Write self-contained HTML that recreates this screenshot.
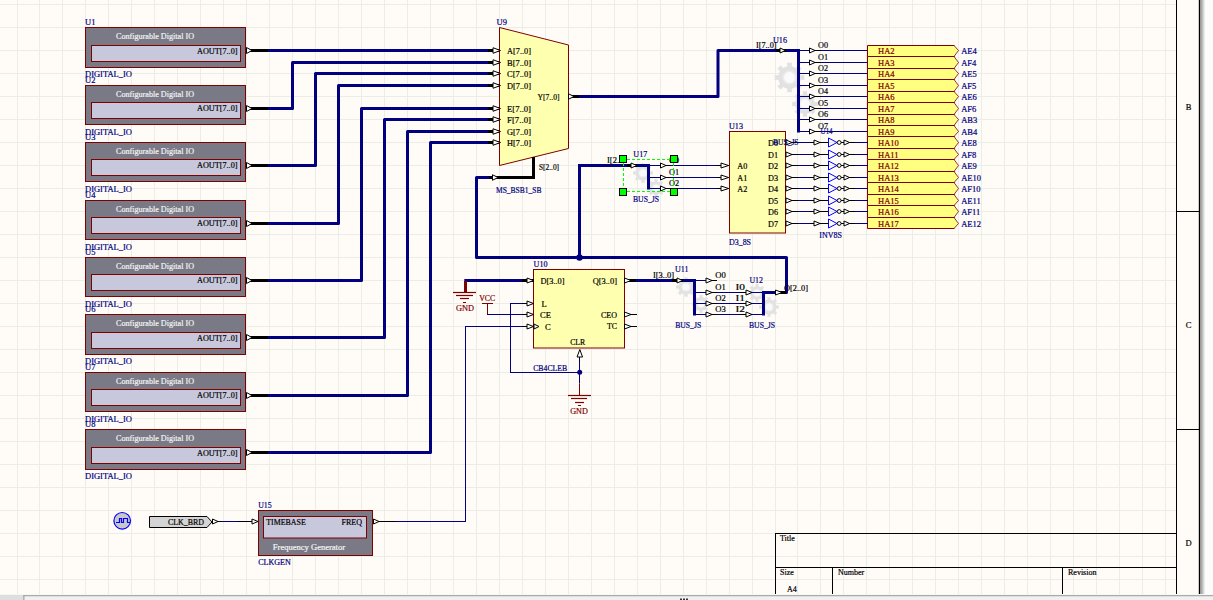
<!DOCTYPE html><html><head><meta charset="utf-8"><style>html,body{margin:0;padding:0;overflow:hidden;background:#FCFCFC}svg{display:block}.s{font-family:"Liberation Serif",serif;stroke-width:0.2px}</style></head><body><svg width="1213" height="600" viewBox="0 0 1213 600"><rect x="0" y="0" width="1213" height="600" fill="#FCFCFC"/>
<rect x="0" y="0" width="1200" height="594" fill="#FFFCF8"/>
<rect x="17" y="0" width="1" height="594" fill="#ECEDE7"/>
<rect x="39" y="0" width="1" height="594" fill="#ECEDE7"/>
<rect x="62" y="0" width="1" height="594" fill="#ECEDE7"/>
<rect x="85" y="0" width="1" height="594" fill="#ECEDE7"/>
<rect x="108" y="0" width="1" height="594" fill="#ECEDE7"/>
<rect x="131" y="0" width="1" height="594" fill="#ECEDE7"/>
<rect x="154" y="0" width="1" height="594" fill="#ECEDE7"/>
<rect x="177" y="0" width="1" height="594" fill="#ECEDE7"/>
<rect x="200" y="0" width="1" height="594" fill="#ECEDE7"/>
<rect x="223" y="0" width="1" height="594" fill="#ECEDE7"/>
<rect x="246" y="0" width="1" height="594" fill="#ECEDE7"/>
<rect x="269" y="0" width="1" height="594" fill="#ECEDE7"/>
<rect x="292" y="0" width="1" height="594" fill="#ECEDE7"/>
<rect x="315" y="0" width="1" height="594" fill="#ECEDE7"/>
<rect x="338" y="0" width="1" height="594" fill="#ECEDE7"/>
<rect x="361" y="0" width="1" height="594" fill="#ECEDE7"/>
<rect x="384" y="0" width="1" height="594" fill="#ECEDE7"/>
<rect x="407" y="0" width="1" height="594" fill="#ECEDE7"/>
<rect x="430" y="0" width="1" height="594" fill="#ECEDE7"/>
<rect x="453" y="0" width="1" height="594" fill="#ECEDE7"/>
<rect x="476" y="0" width="1" height="594" fill="#ECEDE7"/>
<rect x="499" y="0" width="1" height="594" fill="#ECEDE7"/>
<rect x="522" y="0" width="1" height="594" fill="#ECEDE7"/>
<rect x="545" y="0" width="1" height="594" fill="#ECEDE7"/>
<rect x="568" y="0" width="1" height="594" fill="#ECEDE7"/>
<rect x="591" y="0" width="1" height="594" fill="#ECEDE7"/>
<rect x="614" y="0" width="1" height="594" fill="#ECEDE7"/>
<rect x="637" y="0" width="1" height="594" fill="#ECEDE7"/>
<rect x="660" y="0" width="1" height="594" fill="#ECEDE7"/>
<rect x="683" y="0" width="1" height="594" fill="#ECEDE7"/>
<rect x="706" y="0" width="1" height="594" fill="#ECEDE7"/>
<rect x="729" y="0" width="1" height="594" fill="#ECEDE7"/>
<rect x="752" y="0" width="1" height="594" fill="#ECEDE7"/>
<rect x="775" y="0" width="1" height="594" fill="#ECEDE7"/>
<rect x="797" y="0" width="1" height="594" fill="#ECEDE7"/>
<rect x="820" y="0" width="1" height="594" fill="#ECEDE7"/>
<rect x="843" y="0" width="1" height="594" fill="#ECEDE7"/>
<rect x="866" y="0" width="1" height="594" fill="#ECEDE7"/>
<rect x="889" y="0" width="1" height="594" fill="#ECEDE7"/>
<rect x="912" y="0" width="1" height="594" fill="#ECEDE7"/>
<rect x="935" y="0" width="1" height="594" fill="#ECEDE7"/>
<rect x="958" y="0" width="1" height="594" fill="#ECEDE7"/>
<rect x="981" y="0" width="1" height="594" fill="#ECEDE7"/>
<rect x="1004" y="0" width="1" height="594" fill="#ECEDE7"/>
<rect x="1027" y="0" width="1" height="594" fill="#ECEDE7"/>
<rect x="1050" y="0" width="1" height="594" fill="#ECEDE7"/>
<rect x="1073" y="0" width="1" height="594" fill="#ECEDE7"/>
<rect x="1096" y="0" width="1" height="594" fill="#ECEDE7"/>
<rect x="1119" y="0" width="1" height="594" fill="#ECEDE7"/>
<rect x="1142" y="0" width="1" height="594" fill="#ECEDE7"/>
<rect x="1165" y="0" width="1" height="594" fill="#ECEDE7"/>
<rect x="0" y="4" width="1176" height="1" fill="#ECEDE7"/>
<rect x="0" y="27" width="1176" height="1" fill="#ECEDE7"/>
<rect x="0" y="50" width="1176" height="1" fill="#ECEDE7"/>
<rect x="0" y="73" width="1176" height="1" fill="#ECEDE7"/>
<rect x="0" y="96" width="1176" height="1" fill="#ECEDE7"/>
<rect x="0" y="119" width="1176" height="1" fill="#ECEDE7"/>
<rect x="0" y="142" width="1176" height="1" fill="#ECEDE7"/>
<rect x="0" y="165" width="1176" height="1" fill="#ECEDE7"/>
<rect x="0" y="188" width="1176" height="1" fill="#ECEDE7"/>
<rect x="0" y="211" width="1176" height="1" fill="#ECEDE7"/>
<rect x="0" y="234" width="1176" height="1" fill="#ECEDE7"/>
<rect x="0" y="257" width="1176" height="1" fill="#ECEDE7"/>
<rect x="0" y="280" width="1176" height="1" fill="#ECEDE7"/>
<rect x="0" y="303" width="1176" height="1" fill="#ECEDE7"/>
<rect x="0" y="326" width="1176" height="1" fill="#ECEDE7"/>
<rect x="0" y="349" width="1176" height="1" fill="#ECEDE7"/>
<rect x="0" y="372" width="1176" height="1" fill="#ECEDE7"/>
<rect x="0" y="395" width="1176" height="1" fill="#ECEDE7"/>
<rect x="0" y="418" width="1176" height="1" fill="#ECEDE7"/>
<rect x="0" y="441" width="1176" height="1" fill="#ECEDE7"/>
<rect x="0" y="464" width="1176" height="1" fill="#ECEDE7"/>
<rect x="0" y="487" width="1176" height="1" fill="#ECEDE7"/>
<rect x="0" y="510" width="1176" height="1" fill="#ECEDE7"/>
<rect x="0" y="533" width="1176" height="1" fill="#ECEDE7"/>
<rect x="0" y="556" width="1176" height="1" fill="#ECEDE7"/>
<rect x="0" y="579" width="1176" height="1" fill="#ECEDE7"/>
<rect x="1176.0" y="0" width="1" height="594" fill="#000"/>
<rect x="1198.8" y="0" width="1.4" height="594" fill="#000"/>
<defs><linearGradient id="sh" x1="0" x2="1"><stop offset="0" stop-color="#8C8C8C"/><stop offset="1" stop-color="#FCFCFC"/></linearGradient></defs>
<rect x="1200.2" y="0" width="5" height="594" fill="url(#sh)"/>
<rect x="1176" y="211.0" width="24" height="1" fill="#000"/>
<rect x="1176" y="429.0" width="24" height="1" fill="#000"/>
<text x="1188.5" y="110" fill="#000" stroke="#000" font-size="8.5" text-anchor="middle" class="s">B</text>
<text x="1188.5" y="328" fill="#000" stroke="#000" font-size="8.5" text-anchor="middle" class="s">C</text>
<text x="1188.5" y="546" fill="#000" stroke="#000" font-size="8.5" text-anchor="middle" class="s">D</text>
<rect x="775" y="533.0" width="401" height="1" fill="#000"/>
<rect x="775" y="567.0" width="401" height="1" fill="#000"/>
<rect x="775.0" y="533" width="1" height="61" fill="#000"/>
<rect x="832.0" y="567" width="1" height="27" fill="#000"/>
<rect x="1062.0" y="567" width="1" height="27" fill="#000"/>
<text x="780" y="541" fill="#000" stroke="#000" font-size="8" class="s">Title</text>
<text x="780" y="575" fill="#000" stroke="#000" font-size="8" class="s">Size</text>
<text x="838" y="575" fill="#000" stroke="#000" font-size="8" class="s">Number</text>
<text x="1068" y="575" fill="#000" stroke="#000" font-size="8" class="s">Revision</text>
<text x="787" y="592" fill="#000" stroke="#000" font-size="8" class="s">A4</text>
<rect x="0" y="594" width="1213" height="6" fill="#F0F0F0"/>
<rect x="0" y="594.6" width="23" height="5.4" fill="#DEDEDE"/>
<rect x="0" y="594" width="1213" height="0.6" fill="#FDFDFD"/>
<rect x="23.3" y="595.2" width="1190" height="1" fill="#9A9A9A"/>
<rect x="23.3" y="595.2" width="1.1" height="5" fill="#9A9A9A"/>
<rect x="680" y="598.5" width="2" height="1.5" fill="#333"/>
<rect x="683" y="598.5" width="2" height="1.5" fill="#333"/>
<rect x="686" y="598.5" width="2" height="1.5" fill="#333"/>
<polygon points="800.03,73.14 800.68,75.28 804.3,75.04 804.3,79.96 800.68,79.72 800.03,81.86 798.98,83.83 801.7,86.22 798.22,89.7 795.83,86.98 793.86,88.03 791.72,88.68 791.96,92.3 787.04,92.3 787.28,88.68 785.14,88.03 783.17,86.98 780.78,89.7 777.3,86.22 780.02,83.83 778.97,81.86 778.32,79.72 774.7,79.96 774.7,75.04 778.32,75.28 778.97,73.14 780.02,71.17 777.3,68.78 780.78,65.3 783.17,68.02 785.14,66.97 787.28,66.32 787.04,62.7 791.96,62.7 791.72,66.32 793.86,66.97 795.83,68.02 798.22,65.3 801.7,68.78 798.98,71.17" fill="#E2E2E2"/>
<circle cx="789.5" cy="77.5" r="7.2" fill="#EBEBEB"/>
<circle cx="789.5" cy="77.5" r="5.4" fill="#FAFAFA"/>
<polygon points="814.13,100.22 814.69,102.07 817.82,101.87 817.82,106.13 814.69,105.93 814.13,107.78 813.21,109.49 815.58,111.56 812.56,114.58 810.49,112.21 808.78,113.13 806.93,113.69 807.13,116.82 802.87,116.82 803.07,113.69 801.22,113.13 799.51,112.21 797.44,114.58 794.42,111.56 796.79,109.49 795.87,107.78 795.31,105.93 792.18,106.13 792.18,101.87 795.31,102.07 795.87,100.22 796.79,98.51 794.42,96.44 797.44,93.42 799.51,95.79 801.22,94.87 803.07,94.31 802.87,91.18 807.13,91.18 806.93,94.31 808.78,94.87 810.49,95.79 812.56,93.42 815.58,96.44 813.21,98.51" fill="#E2E2E2"/>
<circle cx="805" cy="104" r="6.24" fill="#EBEBEB"/>
<circle cx="805" cy="104" r="4.68" fill="#FAFAFA"/>
<polygon points="650.02,170.09 650.45,171.52 652.86,171.36 652.86,174.64 650.45,174.48 650.02,175.91 649.32,177.22 651.14,178.81 648.81,181.14 647.22,179.32 645.91,180.02 644.48,180.45 644.64,182.86 641.36,182.86 641.52,180.45 640.09,180.02 638.78,179.32 637.19,181.14 634.86,178.81 636.68,177.22 635.98,175.91 635.55,174.48 633.14,174.64 633.14,171.36 635.55,171.52 635.98,170.09 636.68,168.78 634.86,167.19 637.19,164.86 638.78,166.68 640.09,165.98 641.52,165.55 641.36,163.14 644.64,163.14 644.48,165.55 645.91,165.98 647.22,166.68 648.81,164.86 651.14,167.19 649.32,168.78" fill="#E2E2E2"/>
<circle cx="643" cy="173" r="4.8" fill="#EBEBEB"/>
<circle cx="643" cy="173" r="3.6" fill="#FAFAFA"/>
<polygon points="662.32,185.38 662.71,186.67 664.88,186.52 664.88,189.48 662.71,189.33 662.32,190.62 661.69,191.8 663.32,193.23 661.23,195.32 659.8,193.69 658.62,194.32 657.33,194.71 657.48,196.88 654.52,196.88 654.67,194.71 653.38,194.32 652.2,193.69 650.77,195.32 648.68,193.23 650.31,191.8 649.68,190.62 649.29,189.33 647.12,189.48 647.12,186.52 649.29,186.67 649.68,185.38 650.31,184.2 648.68,182.77 650.77,180.68 652.2,182.31 653.38,181.68 654.67,181.29 654.52,179.12 657.48,179.12 657.33,181.29 658.62,181.68 659.8,182.31 661.23,180.68 663.32,182.77 661.69,184.2" fill="#E2E2E2"/>
<circle cx="656" cy="188" r="4.32" fill="#EBEBEB"/>
<circle cx="656" cy="188" r="3.24" fill="#FAFAFA"/>
<polygon points="693.02,284.09 693.45,285.52 695.86,285.36 695.86,288.64 693.45,288.48 693.02,289.91 692.32,291.22 694.14,292.81 691.81,295.14 690.22,293.32 688.91,294.02 687.48,294.45 687.64,296.86 684.36,296.86 684.52,294.45 683.09,294.02 681.78,293.32 680.19,295.14 677.86,292.81 679.68,291.22 678.98,289.91 678.55,288.48 676.14,288.64 676.14,285.36 678.55,285.52 678.98,284.09 679.68,282.78 677.86,281.19 680.19,278.86 681.78,280.68 683.09,279.98 684.52,279.55 684.36,277.14 687.64,277.14 687.48,279.55 688.91,279.98 690.22,280.68 691.81,278.86 694.14,281.19 692.32,282.78" fill="#E2E2E2"/>
<circle cx="686" cy="287" r="4.8" fill="#EBEBEB"/>
<circle cx="686" cy="287" r="3.6" fill="#FAFAFA"/>
<polygon points="707.32,301.38 707.71,302.67 709.88,302.52 709.88,305.48 707.71,305.33 707.32,306.62 706.69,307.8 708.32,309.23 706.23,311.32 704.8,309.69 703.62,310.32 702.33,310.71 702.48,312.88 699.52,312.88 699.67,310.71 698.38,310.32 697.2,309.69 695.77,311.32 693.68,309.23 695.31,307.8 694.68,306.62 694.29,305.33 692.12,305.48 692.12,302.52 694.29,302.67 694.68,301.38 695.31,300.2 693.68,298.77 695.77,296.68 697.2,298.31 698.38,297.68 699.67,297.29 699.52,295.12 702.48,295.12 702.33,297.29 703.62,297.68 704.8,298.31 706.23,296.68 708.32,298.77 706.69,300.2" fill="#E2E2E2"/>
<circle cx="701" cy="304" r="4.32" fill="#EBEBEB"/>
<circle cx="701" cy="304" r="3.24" fill="#FAFAFA"/>
<polygon points="763.32,290.38 763.71,291.67 765.88,291.52 765.88,294.48 763.71,294.33 763.32,295.62 762.69,296.8 764.32,298.23 762.23,300.32 760.8,298.69 759.62,299.32 758.33,299.71 758.48,301.88 755.52,301.88 755.67,299.71 754.38,299.32 753.2,298.69 751.77,300.32 749.68,298.23 751.31,296.8 750.68,295.62 750.29,294.33 748.12,294.48 748.12,291.52 750.29,291.67 750.68,290.38 751.31,289.2 749.68,287.77 751.77,285.68 753.2,287.31 754.38,286.68 755.67,286.29 755.52,284.12 758.48,284.12 758.33,286.29 759.62,286.68 760.8,287.31 762.23,285.68 764.32,287.77 762.69,289.2" fill="#E2E2E2"/>
<circle cx="757" cy="293" r="4.32" fill="#EBEBEB"/>
<circle cx="757" cy="293" r="3.24" fill="#FAFAFA"/>
<polygon points="776.02,304.09 776.45,305.52 778.86,305.36 778.86,308.64 776.45,308.48 776.02,309.91 775.32,311.22 777.14,312.81 774.81,315.14 773.22,313.32 771.91,314.02 770.48,314.45 770.64,316.86 767.36,316.86 767.52,314.45 766.09,314.02 764.78,313.32 763.19,315.14 760.86,312.81 762.68,311.22 761.98,309.91 761.55,308.48 759.14,308.64 759.14,305.36 761.55,305.52 761.98,304.09 762.68,302.78 760.86,301.19 763.19,298.86 764.78,300.68 766.09,299.98 767.52,299.55 767.36,297.14 770.64,297.14 770.48,299.55 771.91,299.98 773.22,300.68 774.81,298.86 777.14,301.19 775.32,302.78" fill="#E2E2E2"/>
<circle cx="769" cy="307" r="4.8" fill="#EBEBEB"/>
<circle cx="769" cy="307" r="3.6" fill="#FAFAFA"/>
<text x="85" y="24.9" fill="#000080" stroke="#000080" font-size="8.5" class="s">U1</text>
<rect x="85.5" y="27.5" width="160" height="40" fill="#7A7A86" stroke="#800000" stroke-width="1"/>
<rect x="91.5" y="45.5" width="149" height="16" fill="#C8C8DC" stroke="#800000" stroke-width="1"/>
<text x="116" y="38.8" fill="#F4F4F4" stroke="#F4F4F4" font-size="8.5" textLength="78" lengthAdjust="spacingAndGlyphs" class="s">Configurable Digital IO</text>
<text x="237.5" y="54.3" fill="#000" stroke="#000" font-size="8.5" text-anchor="end" textLength="40.5" lengthAdjust="spacingAndGlyphs" class="s">AOUT[7..0]</text>
<text x="85" y="76.8" fill="#000080" stroke="#000080" font-size="8.5" textLength="47" lengthAdjust="spacingAndGlyphs" class="s">DIGITAL_IO</text>
<rect x="246" y="49.0" width="22" height="3" fill="#000"/>
<polygon points="246.5,47.5 252.0,50.5 246.5,53.5" fill="#fff" stroke="#000" stroke-width="1"/>
<text x="85" y="82.9" fill="#000080" stroke="#000080" font-size="8.5" class="s">U2</text>
<rect x="85.5" y="85.5" width="160" height="39" fill="#7A7A86" stroke="#800000" stroke-width="1"/>
<rect x="91.5" y="102.5" width="149" height="16" fill="#C8C8DC" stroke="#800000" stroke-width="1"/>
<text x="116" y="96.8" fill="#F4F4F4" stroke="#F4F4F4" font-size="8.5" textLength="78" lengthAdjust="spacingAndGlyphs" class="s">Configurable Digital IO</text>
<text x="237.5" y="111.3" fill="#000" stroke="#000" font-size="8.5" text-anchor="end" textLength="40.5" lengthAdjust="spacingAndGlyphs" class="s">AOUT[7..0]</text>
<text x="85" y="134.8" fill="#000080" stroke="#000080" font-size="8.5" textLength="47" lengthAdjust="spacingAndGlyphs" class="s">DIGITAL_IO</text>
<rect x="246" y="107.0" width="22" height="3" fill="#000"/>
<polygon points="246.5,105.5 252.0,108.5 246.5,111.5" fill="#fff" stroke="#000" stroke-width="1"/>
<text x="85" y="139.9" fill="#000080" stroke="#000080" font-size="8.5" class="s">U3</text>
<rect x="85.5" y="142.5" width="160" height="39" fill="#7A7A86" stroke="#800000" stroke-width="1"/>
<rect x="91.5" y="159.5" width="149" height="16" fill="#C8C8DC" stroke="#800000" stroke-width="1"/>
<text x="116" y="153.8" fill="#F4F4F4" stroke="#F4F4F4" font-size="8.5" textLength="78" lengthAdjust="spacingAndGlyphs" class="s">Configurable Digital IO</text>
<text x="237.5" y="168.3" fill="#000" stroke="#000" font-size="8.5" text-anchor="end" textLength="40.5" lengthAdjust="spacingAndGlyphs" class="s">AOUT[7..0]</text>
<text x="85" y="191.8" fill="#000080" stroke="#000080" font-size="8.5" textLength="47" lengthAdjust="spacingAndGlyphs" class="s">DIGITAL_IO</text>
<rect x="246" y="164.0" width="22" height="3" fill="#000"/>
<polygon points="246.5,162.5 252.0,165.5 246.5,168.5" fill="#fff" stroke="#000" stroke-width="1"/>
<text x="85" y="197.9" fill="#000080" stroke="#000080" font-size="8.5" class="s">U4</text>
<rect x="85.5" y="200.5" width="160" height="39" fill="#7A7A86" stroke="#800000" stroke-width="1"/>
<rect x="91.5" y="217.5" width="149" height="16" fill="#C8C8DC" stroke="#800000" stroke-width="1"/>
<text x="116" y="211.8" fill="#F4F4F4" stroke="#F4F4F4" font-size="8.5" textLength="78" lengthAdjust="spacingAndGlyphs" class="s">Configurable Digital IO</text>
<text x="237.5" y="226.3" fill="#000" stroke="#000" font-size="8.5" text-anchor="end" textLength="40.5" lengthAdjust="spacingAndGlyphs" class="s">AOUT[7..0]</text>
<text x="85" y="249.8" fill="#000080" stroke="#000080" font-size="8.5" textLength="47" lengthAdjust="spacingAndGlyphs" class="s">DIGITAL_IO</text>
<rect x="246" y="222.0" width="22" height="3" fill="#000"/>
<polygon points="246.5,220.5 252.0,223.5 246.5,226.5" fill="#fff" stroke="#000" stroke-width="1"/>
<text x="85" y="254.9" fill="#000080" stroke="#000080" font-size="8.5" class="s">U5</text>
<rect x="85.5" y="257.5" width="160" height="39" fill="#7A7A86" stroke="#800000" stroke-width="1"/>
<rect x="91.5" y="274.5" width="149" height="16" fill="#C8C8DC" stroke="#800000" stroke-width="1"/>
<text x="116" y="268.8" fill="#F4F4F4" stroke="#F4F4F4" font-size="8.5" textLength="78" lengthAdjust="spacingAndGlyphs" class="s">Configurable Digital IO</text>
<text x="237.5" y="283.3" fill="#000" stroke="#000" font-size="8.5" text-anchor="end" textLength="40.5" lengthAdjust="spacingAndGlyphs" class="s">AOUT[7..0]</text>
<text x="85" y="306.8" fill="#000080" stroke="#000080" font-size="8.5" textLength="47" lengthAdjust="spacingAndGlyphs" class="s">DIGITAL_IO</text>
<rect x="246" y="279.0" width="22" height="3" fill="#000"/>
<polygon points="246.5,277.5 252.0,280.5 246.5,283.5" fill="#fff" stroke="#000" stroke-width="1"/>
<text x="85" y="311.9" fill="#000080" stroke="#000080" font-size="8.5" class="s">U6</text>
<rect x="85.5" y="314.5" width="160" height="40" fill="#7A7A86" stroke="#800000" stroke-width="1"/>
<rect x="91.5" y="332.5" width="149" height="16" fill="#C8C8DC" stroke="#800000" stroke-width="1"/>
<text x="116" y="325.8" fill="#F4F4F4" stroke="#F4F4F4" font-size="8.5" textLength="78" lengthAdjust="spacingAndGlyphs" class="s">Configurable Digital IO</text>
<text x="237.5" y="341.3" fill="#000" stroke="#000" font-size="8.5" text-anchor="end" textLength="40.5" lengthAdjust="spacingAndGlyphs" class="s">AOUT[7..0]</text>
<text x="85" y="363.8" fill="#000080" stroke="#000080" font-size="8.5" textLength="47" lengthAdjust="spacingAndGlyphs" class="s">DIGITAL_IO</text>
<rect x="246" y="336.0" width="22" height="3" fill="#000"/>
<polygon points="246.5,334.5 252.0,337.5 246.5,340.5" fill="#fff" stroke="#000" stroke-width="1"/>
<text x="85" y="369.9" fill="#000080" stroke="#000080" font-size="8.5" class="s">U7</text>
<rect x="85.5" y="372.5" width="160" height="39" fill="#7A7A86" stroke="#800000" stroke-width="1"/>
<rect x="91.5" y="389.5" width="149" height="16" fill="#C8C8DC" stroke="#800000" stroke-width="1"/>
<text x="116" y="383.8" fill="#F4F4F4" stroke="#F4F4F4" font-size="8.5" textLength="78" lengthAdjust="spacingAndGlyphs" class="s">Configurable Digital IO</text>
<text x="237.5" y="398.3" fill="#000" stroke="#000" font-size="8.5" text-anchor="end" textLength="40.5" lengthAdjust="spacingAndGlyphs" class="s">AOUT[7..0]</text>
<text x="85" y="421.8" fill="#000080" stroke="#000080" font-size="8.5" textLength="47" lengthAdjust="spacingAndGlyphs" class="s">DIGITAL_IO</text>
<rect x="246" y="394.0" width="22" height="3" fill="#000"/>
<polygon points="246.5,392.5 252.0,395.5 246.5,398.5" fill="#fff" stroke="#000" stroke-width="1"/>
<text x="85" y="426.9" fill="#000080" stroke="#000080" font-size="8.5" class="s">U8</text>
<rect x="85.5" y="429.5" width="160" height="40" fill="#7A7A86" stroke="#800000" stroke-width="1"/>
<rect x="91.5" y="447.5" width="149" height="16" fill="#C8C8DC" stroke="#800000" stroke-width="1"/>
<text x="116" y="440.8" fill="#F4F4F4" stroke="#F4F4F4" font-size="8.5" textLength="78" lengthAdjust="spacingAndGlyphs" class="s">Configurable Digital IO</text>
<text x="237.5" y="456.3" fill="#000" stroke="#000" font-size="8.5" text-anchor="end" textLength="40.5" lengthAdjust="spacingAndGlyphs" class="s">AOUT[7..0]</text>
<text x="85" y="478.8" fill="#000080" stroke="#000080" font-size="8.5" textLength="47" lengthAdjust="spacingAndGlyphs" class="s">DIGITAL_IO</text>
<rect x="246" y="451.0" width="22" height="3" fill="#000"/>
<polygon points="246.5,449.5 252.0,452.5 246.5,455.5" fill="#fff" stroke="#000" stroke-width="1"/>
<rect x="268" y="49.0" width="222" height="3" fill="#000080"/>
<polyline points="268,108.5 292.5,108.5 292.5,62.5 489,62.5" fill="none" stroke="#000080" stroke-width="3" stroke-linecap="butt" stroke-linejoin="round"/>
<polyline points="268,165.5 315.5,165.5 315.5,73.5 489,73.5" fill="none" stroke="#000080" stroke-width="3" stroke-linecap="butt" stroke-linejoin="round"/>
<polyline points="268,223.5 338.5,223.5 338.5,85.5 489,85.5" fill="none" stroke="#000080" stroke-width="3" stroke-linecap="butt" stroke-linejoin="round"/>
<polyline points="268,280.5 361.5,280.5 361.5,108.5 489,108.5" fill="none" stroke="#000080" stroke-width="3" stroke-linecap="butt" stroke-linejoin="round"/>
<polyline points="268,337.5 384.5,337.5 384.5,119.5 489,119.5" fill="none" stroke="#000080" stroke-width="3" stroke-linecap="butt" stroke-linejoin="round"/>
<polyline points="268,395.5 407.5,395.5 407.5,131.5 489,131.5" fill="none" stroke="#000080" stroke-width="3" stroke-linecap="butt" stroke-linejoin="round"/>
<polyline points="268,452.5 430.5,452.5 430.5,142.5 489,142.5" fill="none" stroke="#000080" stroke-width="3" stroke-linecap="butt" stroke-linejoin="round"/>
<text x="496.5" y="25" fill="#000080" stroke="#000080" font-size="8.5" class="s">U9</text>
<polygon points="499.5,27.5 568.5,45 568.5,148.5 499.5,165.5" fill="#FFFFB0" stroke="#800000" stroke-width="1"/>
<rect x="488" y="49.0" width="11" height="3" fill="#000"/>
<polygon points="493,47.75 500.5,50.5 493,53.25" fill="#fff" stroke="#000" stroke-width="1"/>
<text x="507" y="54.2" fill="#000" stroke="#000" font-size="8.5" textLength="24" lengthAdjust="spacingAndGlyphs" class="s">A[7..0]</text>
<rect x="488" y="61.0" width="11" height="3" fill="#000"/>
<polygon points="493,59.75 500.5,62.5 493,65.25" fill="#fff" stroke="#000" stroke-width="1"/>
<text x="507" y="66.2" fill="#000" stroke="#000" font-size="8.5" textLength="24" lengthAdjust="spacingAndGlyphs" class="s">B[7..0]</text>
<rect x="488" y="72.0" width="11" height="3" fill="#000"/>
<polygon points="493,70.75 500.5,73.5 493,76.25" fill="#fff" stroke="#000" stroke-width="1"/>
<text x="507" y="77.2" fill="#000" stroke="#000" font-size="8.5" textLength="24" lengthAdjust="spacingAndGlyphs" class="s">C[7..0]</text>
<rect x="488" y="84.0" width="11" height="3" fill="#000"/>
<polygon points="493,82.75 500.5,85.5 493,88.25" fill="#fff" stroke="#000" stroke-width="1"/>
<text x="507" y="89.2" fill="#000" stroke="#000" font-size="8.5" textLength="24" lengthAdjust="spacingAndGlyphs" class="s">D[7..0]</text>
<rect x="488" y="107.0" width="11" height="3" fill="#000"/>
<polygon points="493,105.75 500.5,108.5 493,111.25" fill="#fff" stroke="#000" stroke-width="1"/>
<text x="507" y="112.2" fill="#000" stroke="#000" font-size="8.5" textLength="24" lengthAdjust="spacingAndGlyphs" class="s">E[7..0]</text>
<rect x="488" y="118.0" width="11" height="3" fill="#000"/>
<polygon points="493,116.75 500.5,119.5 493,122.25" fill="#fff" stroke="#000" stroke-width="1"/>
<text x="507" y="123.2" fill="#000" stroke="#000" font-size="8.5" textLength="24" lengthAdjust="spacingAndGlyphs" class="s">F[7..0]</text>
<rect x="488" y="130.0" width="11" height="3" fill="#000"/>
<polygon points="493,128.75 500.5,131.5 493,134.25" fill="#fff" stroke="#000" stroke-width="1"/>
<text x="507" y="135.2" fill="#000" stroke="#000" font-size="8.5" textLength="24" lengthAdjust="spacingAndGlyphs" class="s">G[7..0]</text>
<rect x="488" y="141.0" width="11" height="3" fill="#000"/>
<polygon points="493,139.75 500.5,142.5 493,145.25" fill="#fff" stroke="#000" stroke-width="1"/>
<text x="507" y="146.2" fill="#000" stroke="#000" font-size="8.5" textLength="24" lengthAdjust="spacingAndGlyphs" class="s">H[7..0]</text>
<text x="559.5" y="100" fill="#000" stroke="#000" font-size="8.5" text-anchor="end" textLength="22" lengthAdjust="spacingAndGlyphs" class="s">Y[7..0]</text>
<rect x="569" y="95.0" width="10" height="3" fill="#000"/>
<polygon points="568.5,93.75 574.0,96.5 568.5,99.25" fill="#fff" stroke="#000" stroke-width="1"/>
<polyline points="579,96.5 718,96.5 718,50.5 777,50.5" fill="none" stroke="#000080" stroke-width="3" stroke-linecap="butt" stroke-linejoin="round"/>
<polyline points="533.5,157 533.5,177.5 488,177.5" fill="none" stroke="#000" stroke-width="3" stroke-linecap="butt" stroke-linejoin="miter"/>
<polygon points="492.5,174.75 498.0,177.5 492.5,180.25" fill="#fff" stroke="#000" stroke-width="1"/>
<text x="539" y="169.7" fill="#000" stroke="#000" font-size="8" textLength="20" lengthAdjust="spacingAndGlyphs" class="s">S[2..0]</text>
<text x="496" y="192.6" fill="#000080" stroke="#000080" font-size="8" textLength="45.5" lengthAdjust="spacingAndGlyphs" class="s">MS_BSB1_SB</text>
<polyline points="488,177.5 476.5,177.5 476.5,257.5 786.5,257.5 786.5,292.5" fill="none" stroke="#000080" stroke-width="3" stroke-linecap="round" stroke-linejoin="round"/>
<polyline points="579.5,257.5 579.5,165.5 627,165.5" fill="none" stroke="#000080" stroke-width="3" stroke-linecap="square" stroke-linejoin="miter"/>
<circle cx="579.5" cy="257.5" r="3.2" fill="#000080"/>
<text x="773" y="42.8" fill="#000080" stroke="#000080" font-size="8.5" textLength="14" lengthAdjust="spacingAndGlyphs" class="s">U16</text>
<text x="756" y="48.3" fill="#000" stroke="#000" font-size="8" textLength="20.5" lengthAdjust="spacingAndGlyphs" class="s">I[7..0]</text>
<rect x="776" y="49.0" width="10" height="3" fill="#000"/>
<polygon points="780,48.0 785.5,50.5 780,53.0" fill="#fff" stroke="#000" stroke-width="1"/>
<rect x="786" y="49.0" width="14" height="3" fill="#000080"/>
<rect x="797.0" y="49" width="3" height="83.5" fill="#000080"/>
<rect x="800" y="50.0" width="68" height="1" fill="#000080"/>
<rect x="809" y="50.0" width="12" height="1" fill="#000"/>
<polygon points="809.5,48.0 815.0,50.5 809.5,53.0" fill="#fff" stroke="#000" stroke-width="1"/>
<text x="818" y="47.7" fill="#000" stroke="#000" font-size="8.5" textLength="10" lengthAdjust="spacingAndGlyphs" class="s">O0</text>
<rect x="800" y="62.0" width="68" height="1" fill="#000080"/>
<rect x="809" y="62.0" width="12" height="1" fill="#000"/>
<polygon points="809.5,60.0 815.0,62.5 809.5,65.0" fill="#fff" stroke="#000" stroke-width="1"/>
<text x="818" y="59.7" fill="#000" stroke="#000" font-size="8.5" textLength="10" lengthAdjust="spacingAndGlyphs" class="s">O1</text>
<rect x="800" y="73.0" width="68" height="1" fill="#000080"/>
<rect x="809" y="73.0" width="12" height="1" fill="#000"/>
<polygon points="809.5,71.0 815.0,73.5 809.5,76.0" fill="#fff" stroke="#000" stroke-width="1"/>
<text x="818" y="70.7" fill="#000" stroke="#000" font-size="8.5" textLength="10" lengthAdjust="spacingAndGlyphs" class="s">O2</text>
<rect x="800" y="85.0" width="68" height="1" fill="#000080"/>
<rect x="809" y="85.0" width="12" height="1" fill="#000"/>
<polygon points="809.5,83.0 815.0,85.5 809.5,88.0" fill="#fff" stroke="#000" stroke-width="1"/>
<text x="818" y="82.7" fill="#000" stroke="#000" font-size="8.5" textLength="10" lengthAdjust="spacingAndGlyphs" class="s">O3</text>
<rect x="800" y="96.0" width="68" height="1" fill="#000080"/>
<rect x="809" y="96.0" width="12" height="1" fill="#000"/>
<polygon points="809.5,94.0 815.0,96.5 809.5,99.0" fill="#fff" stroke="#000" stroke-width="1"/>
<text x="818" y="93.7" fill="#000" stroke="#000" font-size="8.5" textLength="10" lengthAdjust="spacingAndGlyphs" class="s">O4</text>
<rect x="800" y="108.0" width="68" height="1" fill="#000080"/>
<rect x="809" y="108.0" width="12" height="1" fill="#000"/>
<polygon points="809.5,106.0 815.0,108.5 809.5,111.0" fill="#fff" stroke="#000" stroke-width="1"/>
<text x="818" y="105.7" fill="#000" stroke="#000" font-size="8.5" textLength="10" lengthAdjust="spacingAndGlyphs" class="s">O5</text>
<rect x="800" y="119.0" width="68" height="1" fill="#000080"/>
<rect x="809" y="119.0" width="12" height="1" fill="#000"/>
<polygon points="809.5,117.0 815.0,119.5 809.5,122.0" fill="#fff" stroke="#000" stroke-width="1"/>
<text x="818" y="116.7" fill="#000" stroke="#000" font-size="8.5" textLength="10" lengthAdjust="spacingAndGlyphs" class="s">O6</text>
<rect x="800" y="131.0" width="68" height="1" fill="#000080"/>
<rect x="809" y="131.0" width="12" height="1" fill="#000"/>
<polygon points="809.5,129.0 815.0,131.5 809.5,134.0" fill="#fff" stroke="#000" stroke-width="1"/>
<text x="818" y="128.7" fill="#000" stroke="#000" font-size="8.5" textLength="10" lengthAdjust="spacingAndGlyphs" class="s">O7</text>
<text x="820.6" y="134.3" fill="#000080" stroke="#000080" font-size="8.5" textLength="12" lengthAdjust="spacingAndGlyphs" class="s">U14</text>
<polygon points="867.5,45.5 954,45.5 958,50.5 954,56.5 867.5,56.5" fill="#FFFF80" stroke="none" stroke-width="0"/>
<polyline points="954.5,45.5 867.5,45.5 867.5,56.5 954.5,56.5" fill="none" stroke="#800000" stroke-width="1"/>
<polyline points="954,45.5 958.5,50.5 954,56.5" fill="none" stroke="#800000" stroke-width="0.8"/>
<polygon points="867.5,56.5 954,56.5 958,62.5 954,68.5 867.5,68.5" fill="#FFFF80" stroke="none" stroke-width="0"/>
<polyline points="954.5,56.5 867.5,56.5 867.5,68.5 954.5,68.5" fill="none" stroke="#800000" stroke-width="1"/>
<polyline points="954,56.5 958.5,62.5 954,68.5" fill="none" stroke="#800000" stroke-width="0.8"/>
<polygon points="867.5,68.5 954,68.5 958,73.5 954,79.5 867.5,79.5" fill="#FFFF80" stroke="none" stroke-width="0"/>
<polyline points="954.5,68.5 867.5,68.5 867.5,79.5 954.5,79.5" fill="none" stroke="#800000" stroke-width="1"/>
<polyline points="954,68.5 958.5,73.5 954,79.5" fill="none" stroke="#800000" stroke-width="0.8"/>
<polygon points="867.5,79.5 954,79.5 958,85.5 954,91.5 867.5,91.5" fill="#FFFF80" stroke="none" stroke-width="0"/>
<polyline points="954.5,79.5 867.5,79.5 867.5,91.5 954.5,91.5" fill="none" stroke="#800000" stroke-width="1"/>
<polyline points="954,79.5 958.5,85.5 954,91.5" fill="none" stroke="#800000" stroke-width="0.8"/>
<polygon points="867.5,91.5 954,91.5 958,96.5 954,102.5 867.5,102.5" fill="#FFFF80" stroke="none" stroke-width="0"/>
<polyline points="954.5,91.5 867.5,91.5 867.5,102.5 954.5,102.5" fill="none" stroke="#800000" stroke-width="1"/>
<polyline points="954,91.5 958.5,96.5 954,102.5" fill="none" stroke="#800000" stroke-width="0.8"/>
<polygon points="867.5,102.5 954,102.5 958,108.5 954,114.5 867.5,114.5" fill="#FFFF80" stroke="none" stroke-width="0"/>
<polyline points="954.5,102.5 867.5,102.5 867.5,114.5 954.5,114.5" fill="none" stroke="#800000" stroke-width="1"/>
<polyline points="954,102.5 958.5,108.5 954,114.5" fill="none" stroke="#800000" stroke-width="0.8"/>
<polygon points="867.5,114.5 954,114.5 958,119.5 954,125.5 867.5,125.5" fill="#FFFF80" stroke="none" stroke-width="0"/>
<polyline points="954.5,114.5 867.5,114.5 867.5,125.5 954.5,125.5" fill="none" stroke="#800000" stroke-width="1"/>
<polyline points="954,114.5 958.5,119.5 954,125.5" fill="none" stroke="#800000" stroke-width="0.8"/>
<polygon points="867.5,125.5 954,125.5 958,131.5 954,136.5 867.5,136.5" fill="#FFFF80" stroke="none" stroke-width="0"/>
<polyline points="954.5,125.5 867.5,125.5 867.5,136.5 954.5,136.5" fill="none" stroke="#800000" stroke-width="1"/>
<polyline points="954,125.5 958.5,131.5 954,136.5" fill="none" stroke="#800000" stroke-width="0.8"/>
<polygon points="867.5,136.5 954,136.5 958,142.5 954,148.5 867.5,148.5" fill="#FFFF80" stroke="none" stroke-width="0"/>
<polyline points="954.5,136.5 867.5,136.5 867.5,148.5 954.5,148.5" fill="none" stroke="#800000" stroke-width="1"/>
<polyline points="954,136.5 958.5,142.5 954,148.5" fill="none" stroke="#800000" stroke-width="0.8"/>
<polygon points="867.5,148.5 954,148.5 958,154.5 954,159.5 867.5,159.5" fill="#FFFF80" stroke="none" stroke-width="0"/>
<polyline points="954.5,148.5 867.5,148.5 867.5,159.5 954.5,159.5" fill="none" stroke="#800000" stroke-width="1"/>
<polyline points="954,148.5 958.5,154.5 954,159.5" fill="none" stroke="#800000" stroke-width="0.8"/>
<polygon points="867.5,159.5 954,159.5 958,165.5 954,171.5 867.5,171.5" fill="#FFFF80" stroke="none" stroke-width="0"/>
<polyline points="954.5,159.5 867.5,159.5 867.5,171.5 954.5,171.5" fill="none" stroke="#800000" stroke-width="1"/>
<polyline points="954,159.5 958.5,165.5 954,171.5" fill="none" stroke="#800000" stroke-width="0.8"/>
<polygon points="867.5,171.5 954,171.5 958,177.5 954,182.5 867.5,182.5" fill="#FFFF80" stroke="none" stroke-width="0"/>
<polyline points="954.5,171.5 867.5,171.5 867.5,182.5 954.5,182.5" fill="none" stroke="#800000" stroke-width="1"/>
<polyline points="954,171.5 958.5,177.5 954,182.5" fill="none" stroke="#800000" stroke-width="0.8"/>
<polygon points="867.5,182.5 954,182.5 958,188.5 954,194.5 867.5,194.5" fill="#FFFF80" stroke="none" stroke-width="0"/>
<polyline points="954.5,182.5 867.5,182.5 867.5,194.5 954.5,194.5" fill="none" stroke="#800000" stroke-width="1"/>
<polyline points="954,182.5 958.5,188.5 954,194.5" fill="none" stroke="#800000" stroke-width="0.8"/>
<polygon points="867.5,194.5 954,194.5 958,200.5 954,205.5 867.5,205.5" fill="#FFFF80" stroke="none" stroke-width="0"/>
<polyline points="954.5,194.5 867.5,194.5 867.5,205.5 954.5,205.5" fill="none" stroke="#800000" stroke-width="1"/>
<polyline points="954,194.5 958.5,200.5 954,205.5" fill="none" stroke="#800000" stroke-width="0.8"/>
<polygon points="867.5,205.5 954,205.5 958,211.5 954,217.5 867.5,217.5" fill="#FFFF80" stroke="none" stroke-width="0"/>
<polyline points="954.5,205.5 867.5,205.5 867.5,217.5 954.5,217.5" fill="none" stroke="#800000" stroke-width="1"/>
<polyline points="954,205.5 958.5,211.5 954,217.5" fill="none" stroke="#800000" stroke-width="0.8"/>
<polygon points="867.5,217.5 954,217.5 958,223.5 954,228.5 867.5,228.5" fill="#FFFF80" stroke="none" stroke-width="0"/>
<polyline points="954.5,217.5 867.5,217.5 867.5,228.5 954.5,228.5" fill="none" stroke="#800000" stroke-width="1"/>
<polyline points="954,217.5 958.5,223.5 954,228.5" fill="none" stroke="#800000" stroke-width="0.8"/>
<text x="878" y="54.1" fill="#800000" stroke="#800000" font-size="8.5" class="s">HA2</text>
<text x="961.2" y="53.8" fill="#000080" stroke="#000080" font-size="8.5" class="s">AE4</text>
<text x="878" y="66.1" fill="#800000" stroke="#800000" font-size="8.5" class="s">HA3</text>
<text x="961.2" y="65.8" fill="#000080" stroke="#000080" font-size="8.5" class="s">AF4</text>
<text x="878" y="77.1" fill="#800000" stroke="#800000" font-size="8.5" class="s">HA4</text>
<text x="961.2" y="76.8" fill="#000080" stroke="#000080" font-size="8.5" class="s">AE5</text>
<text x="878" y="89.1" fill="#800000" stroke="#800000" font-size="8.5" class="s">HA5</text>
<text x="961.2" y="88.8" fill="#000080" stroke="#000080" font-size="8.5" class="s">AF5</text>
<text x="878" y="100.1" fill="#800000" stroke="#800000" font-size="8.5" class="s">HA6</text>
<text x="961.2" y="99.8" fill="#000080" stroke="#000080" font-size="8.5" class="s">AE6</text>
<text x="878" y="112.1" fill="#800000" stroke="#800000" font-size="8.5" class="s">HA7</text>
<text x="961.2" y="111.8" fill="#000080" stroke="#000080" font-size="8.5" class="s">AF6</text>
<text x="878" y="123.1" fill="#800000" stroke="#800000" font-size="8.5" class="s">HA8</text>
<text x="961.2" y="122.8" fill="#000080" stroke="#000080" font-size="8.5" class="s">AB3</text>
<text x="878" y="135.1" fill="#800000" stroke="#800000" font-size="8.5" class="s">HA9</text>
<text x="961.2" y="134.8" fill="#000080" stroke="#000080" font-size="8.5" class="s">AB4</text>
<text x="878" y="146.1" fill="#800000" stroke="#800000" font-size="8.5" class="s">HA10</text>
<text x="961.2" y="145.8" fill="#000080" stroke="#000080" font-size="8.5" class="s">AE8</text>
<text x="878" y="158.1" fill="#800000" stroke="#800000" font-size="8.5" class="s">HA11</text>
<text x="961.2" y="157.8" fill="#000080" stroke="#000080" font-size="8.5" class="s">AF8</text>
<text x="878" y="169.1" fill="#800000" stroke="#800000" font-size="8.5" class="s">HA12</text>
<text x="961.2" y="168.8" fill="#000080" stroke="#000080" font-size="8.5" class="s">AE9</text>
<text x="878" y="181.1" fill="#800000" stroke="#800000" font-size="8.5" class="s">HA13</text>
<text x="961.2" y="180.8" fill="#000080" stroke="#000080" font-size="8.5" class="s">AE10</text>
<text x="878" y="192.1" fill="#800000" stroke="#800000" font-size="8.5" class="s">HA14</text>
<text x="961.2" y="191.8" fill="#000080" stroke="#000080" font-size="8.5" class="s">AF10</text>
<text x="878" y="204.1" fill="#800000" stroke="#800000" font-size="8.5" class="s">HA15</text>
<text x="961.2" y="203.8" fill="#000080" stroke="#000080" font-size="8.5" class="s">AE11</text>
<text x="878" y="215.1" fill="#800000" stroke="#800000" font-size="8.5" class="s">HA16</text>
<text x="961.2" y="214.8" fill="#000080" stroke="#000080" font-size="8.5" class="s">AF11</text>
<text x="878" y="227.1" fill="#800000" stroke="#800000" font-size="8.5" class="s">HA17</text>
<text x="961.2" y="226.8" fill="#000080" stroke="#000080" font-size="8.5" class="s">AE12</text>
<text x="729" y="128.8" fill="#000080" stroke="#000080" font-size="8.5" textLength="14" lengthAdjust="spacingAndGlyphs" class="s">U13</text>
<rect x="729.5" y="131.5" width="56" height="101.5" fill="#FFFFB0" stroke="#800000" stroke-width="1"/>
<text x="729" y="244.7" fill="#000080" stroke="#000080" font-size="8" textLength="22" lengthAdjust="spacingAndGlyphs" class="s">D3_8S</text>
<rect x="717" y="165.0" width="12" height="1" fill="#000"/>
<polygon points="721,163.0 728.5,165.5 721,168.0" fill="#fff" stroke="#000" stroke-width="1"/>
<text x="737.3" y="168.9" fill="#000" stroke="#000" font-size="8.5" textLength="10" lengthAdjust="spacingAndGlyphs" class="s">A0</text>
<rect x="717" y="177.0" width="12" height="1" fill="#000"/>
<polygon points="721,175.0 728.5,177.5 721,180.0" fill="#fff" stroke="#000" stroke-width="1"/>
<text x="737.3" y="180.9" fill="#000" stroke="#000" font-size="8.5" textLength="10" lengthAdjust="spacingAndGlyphs" class="s">A1</text>
<rect x="717" y="188.0" width="12" height="1" fill="#000"/>
<polygon points="721,186.0 728.5,188.5 721,191.0" fill="#fff" stroke="#000" stroke-width="1"/>
<text x="737.3" y="191.9" fill="#000" stroke="#000" font-size="8.5" textLength="10" lengthAdjust="spacingAndGlyphs" class="s">A2</text>
<text x="768" y="145.9" fill="#000" stroke="#000" font-size="8.5" textLength="10" lengthAdjust="spacingAndGlyphs" class="s">D0</text>
<rect x="786" y="142.0" width="12" height="1" fill="#000"/>
<polygon points="786,140.0 792,142.5 786,145.0" fill="#fff" stroke="#000" stroke-width="1"/>
<rect x="798" y="142.0" width="12" height="1" fill="#000080"/>
<rect x="810" y="142.0" width="18" height="1" fill="#000"/>
<polygon points="814,140.0 820,142.5 814,145.0" fill="#fff" stroke="#000" stroke-width="1"/>
<polygon points="828.5,138.0 837,142.5 828.5,147.0" fill="none" stroke="#0000FF" stroke-width="1"/>
<circle cx="839.2" cy="142.5" r="1.9" fill="#fff" stroke="#000" stroke-width="1"/>
<rect x="841" y="142.0" width="14" height="1" fill="#000"/>
<polygon points="844,140.0 849.5,142.5 844,145.0" fill="#fff" stroke="#000" stroke-width="1"/>
<rect x="855" y="142.0" width="13" height="1" fill="#000080"/>
<text x="768" y="157.9" fill="#000" stroke="#000" font-size="8.5" textLength="10" lengthAdjust="spacingAndGlyphs" class="s">D1</text>
<rect x="786" y="154.0" width="12" height="1" fill="#000"/>
<polygon points="786,152.0 792,154.5 786,157.0" fill="#fff" stroke="#000" stroke-width="1"/>
<rect x="798" y="154.0" width="12" height="1" fill="#000080"/>
<rect x="810" y="154.0" width="18" height="1" fill="#000"/>
<polygon points="814,152.0 820,154.5 814,157.0" fill="#fff" stroke="#000" stroke-width="1"/>
<polygon points="828.5,150.0 837,154.5 828.5,159.0" fill="none" stroke="#0000FF" stroke-width="1"/>
<circle cx="839.2" cy="154.5" r="1.9" fill="#fff" stroke="#000" stroke-width="1"/>
<rect x="841" y="154.0" width="14" height="1" fill="#000"/>
<polygon points="844,152.0 849.5,154.5 844,157.0" fill="#fff" stroke="#000" stroke-width="1"/>
<rect x="855" y="154.0" width="13" height="1" fill="#000080"/>
<text x="768" y="168.9" fill="#000" stroke="#000" font-size="8.5" textLength="10" lengthAdjust="spacingAndGlyphs" class="s">D2</text>
<rect x="786" y="165.0" width="12" height="1" fill="#000"/>
<polygon points="786,163.0 792,165.5 786,168.0" fill="#fff" stroke="#000" stroke-width="1"/>
<rect x="798" y="165.0" width="12" height="1" fill="#000080"/>
<rect x="810" y="165.0" width="18" height="1" fill="#000"/>
<polygon points="814,163.0 820,165.5 814,168.0" fill="#fff" stroke="#000" stroke-width="1"/>
<polygon points="828.5,161.0 837,165.5 828.5,170.0" fill="none" stroke="#0000FF" stroke-width="1"/>
<circle cx="839.2" cy="165.5" r="1.9" fill="#fff" stroke="#000" stroke-width="1"/>
<rect x="841" y="165.0" width="14" height="1" fill="#000"/>
<polygon points="844,163.0 849.5,165.5 844,168.0" fill="#fff" stroke="#000" stroke-width="1"/>
<rect x="855" y="165.0" width="13" height="1" fill="#000080"/>
<text x="768" y="180.9" fill="#000" stroke="#000" font-size="8.5" textLength="10" lengthAdjust="spacingAndGlyphs" class="s">D3</text>
<rect x="786" y="177.0" width="12" height="1" fill="#000"/>
<polygon points="786,175.0 792,177.5 786,180.0" fill="#fff" stroke="#000" stroke-width="1"/>
<rect x="798" y="177.0" width="12" height="1" fill="#000080"/>
<rect x="810" y="177.0" width="18" height="1" fill="#000"/>
<polygon points="814,175.0 820,177.5 814,180.0" fill="#fff" stroke="#000" stroke-width="1"/>
<polygon points="828.5,173.0 837,177.5 828.5,182.0" fill="none" stroke="#0000FF" stroke-width="1"/>
<circle cx="839.2" cy="177.5" r="1.9" fill="#fff" stroke="#000" stroke-width="1"/>
<rect x="841" y="177.0" width="14" height="1" fill="#000"/>
<polygon points="844,175.0 849.5,177.5 844,180.0" fill="#fff" stroke="#000" stroke-width="1"/>
<rect x="855" y="177.0" width="13" height="1" fill="#000080"/>
<text x="768" y="191.9" fill="#000" stroke="#000" font-size="8.5" textLength="10" lengthAdjust="spacingAndGlyphs" class="s">D4</text>
<rect x="786" y="188.0" width="12" height="1" fill="#000"/>
<polygon points="786,186.0 792,188.5 786,191.0" fill="#fff" stroke="#000" stroke-width="1"/>
<rect x="798" y="188.0" width="12" height="1" fill="#000080"/>
<rect x="810" y="188.0" width="18" height="1" fill="#000"/>
<polygon points="814,186.0 820,188.5 814,191.0" fill="#fff" stroke="#000" stroke-width="1"/>
<polygon points="828.5,184.0 837,188.5 828.5,193.0" fill="none" stroke="#0000FF" stroke-width="1"/>
<circle cx="839.2" cy="188.5" r="1.9" fill="#fff" stroke="#000" stroke-width="1"/>
<rect x="841" y="188.0" width="14" height="1" fill="#000"/>
<polygon points="844,186.0 849.5,188.5 844,191.0" fill="#fff" stroke="#000" stroke-width="1"/>
<rect x="855" y="188.0" width="13" height="1" fill="#000080"/>
<text x="768" y="203.9" fill="#000" stroke="#000" font-size="8.5" textLength="10" lengthAdjust="spacingAndGlyphs" class="s">D5</text>
<rect x="786" y="200.0" width="12" height="1" fill="#000"/>
<polygon points="786,198.0 792,200.5 786,203.0" fill="#fff" stroke="#000" stroke-width="1"/>
<rect x="798" y="200.0" width="12" height="1" fill="#000080"/>
<rect x="810" y="200.0" width="18" height="1" fill="#000"/>
<polygon points="814,198.0 820,200.5 814,203.0" fill="#fff" stroke="#000" stroke-width="1"/>
<polygon points="828.5,196.0 837,200.5 828.5,205.0" fill="none" stroke="#0000FF" stroke-width="1"/>
<circle cx="839.2" cy="200.5" r="1.9" fill="#fff" stroke="#000" stroke-width="1"/>
<rect x="841" y="200.0" width="14" height="1" fill="#000"/>
<polygon points="844,198.0 849.5,200.5 844,203.0" fill="#fff" stroke="#000" stroke-width="1"/>
<rect x="855" y="200.0" width="13" height="1" fill="#000080"/>
<text x="768" y="214.9" fill="#000" stroke="#000" font-size="8.5" textLength="10" lengthAdjust="spacingAndGlyphs" class="s">D6</text>
<rect x="786" y="211.0" width="12" height="1" fill="#000"/>
<polygon points="786,209.0 792,211.5 786,214.0" fill="#fff" stroke="#000" stroke-width="1"/>
<rect x="798" y="211.0" width="12" height="1" fill="#000080"/>
<rect x="810" y="211.0" width="18" height="1" fill="#000"/>
<polygon points="814,209.0 820,211.5 814,214.0" fill="#fff" stroke="#000" stroke-width="1"/>
<polygon points="828.5,207.0 837,211.5 828.5,216.0" fill="none" stroke="#0000FF" stroke-width="1"/>
<circle cx="839.2" cy="211.5" r="1.9" fill="#fff" stroke="#000" stroke-width="1"/>
<rect x="841" y="211.0" width="14" height="1" fill="#000"/>
<polygon points="844,209.0 849.5,211.5 844,214.0" fill="#fff" stroke="#000" stroke-width="1"/>
<rect x="855" y="211.0" width="13" height="1" fill="#000080"/>
<text x="768" y="226.9" fill="#000" stroke="#000" font-size="8.5" textLength="10" lengthAdjust="spacingAndGlyphs" class="s">D7</text>
<rect x="786" y="223.0" width="12" height="1" fill="#000"/>
<polygon points="786,221.0 792,223.5 786,226.0" fill="#fff" stroke="#000" stroke-width="1"/>
<rect x="798" y="223.0" width="12" height="1" fill="#000080"/>
<rect x="810" y="223.0" width="18" height="1" fill="#000"/>
<polygon points="814,221.0 820,223.5 814,226.0" fill="#fff" stroke="#000" stroke-width="1"/>
<polygon points="828.5,219.0 837,223.5 828.5,228.0" fill="none" stroke="#0000FF" stroke-width="1"/>
<circle cx="839.2" cy="223.5" r="1.9" fill="#fff" stroke="#000" stroke-width="1"/>
<rect x="841" y="223.0" width="14" height="1" fill="#000"/>
<polygon points="844,221.0 849.5,223.5 844,226.0" fill="#fff" stroke="#000" stroke-width="1"/>
<rect x="855" y="223.0" width="13" height="1" fill="#000080"/>
<text x="773" y="145" fill="#000080" stroke="#000080" font-size="8" textLength="25.5" lengthAdjust="spacingAndGlyphs" class="s">BUS_JS</text>
<text x="819.3" y="237.7" fill="#000080" stroke="#000080" font-size="8" textLength="22.6" lengthAdjust="spacingAndGlyphs" class="s">INV8S</text>
<rect x="627" y="164.0" width="10" height="3" fill="#000"/>
<polygon points="631,163.0 636.8,165.5 631,168.0" fill="#fff" stroke="#000" stroke-width="1"/>
<rect x="637" y="164.0" width="13" height="3" fill="#000080"/>
<rect x="647.0" y="164" width="3" height="25.5" fill="#000080"/>
<rect x="650" y="165.0" width="67" height="1" fill="#000080"/>
<rect x="660" y="165.0" width="11" height="1" fill="#000"/>
<polygon points="660.5,163.0 666.0,165.5 660.5,168.0" fill="#fff" stroke="#000" stroke-width="1"/>
<rect x="650" y="177.0" width="67" height="1" fill="#000080"/>
<rect x="660" y="177.0" width="11" height="1" fill="#000"/>
<polygon points="660.5,175.0 666.0,177.5 660.5,180.0" fill="#fff" stroke="#000" stroke-width="1"/>
<rect x="650" y="188.0" width="67" height="1" fill="#000080"/>
<rect x="660" y="188.0" width="11" height="1" fill="#000"/>
<polygon points="660.5,186.0 666.0,188.5 660.5,191.0" fill="#fff" stroke="#000" stroke-width="1"/>
<text x="633.3" y="156.7" fill="#000080" stroke="#000080" font-size="8.5" textLength="14" lengthAdjust="spacingAndGlyphs" class="s">U17</text>
<text x="607" y="163" fill="#000" stroke="#000" font-size="8.5" class="s">I[2..</text>
<text x="669" y="163" fill="#000" stroke="#000" font-size="8.5" textLength="10" lengthAdjust="spacingAndGlyphs" class="s">O0</text>
<text x="669" y="174.6" fill="#000" stroke="#000" font-size="8.5" textLength="10" lengthAdjust="spacingAndGlyphs" class="s">O1</text>
<text x="669" y="185.8" fill="#000" stroke="#000" font-size="8.5" textLength="10" lengthAdjust="spacingAndGlyphs" class="s">O2</text>
<text x="633" y="202" fill="#000080" stroke="#000080" font-size="8" textLength="26" lengthAdjust="spacingAndGlyphs" class="s">BUS_JS</text>
<g stroke="#00FF00" stroke-width="1" stroke-dasharray="3,2" fill="none"><line x1="627" y1="159.5" x2="670" y2="159.5"/><line x1="627" y1="191.5" x2="670" y2="191.5"/><line x1="623.5" y1="163" x2="623.5" y2="188"/><line x1="673.5" y1="163" x2="673.5" y2="188"/></g>
<rect x="619.5" y="155.5" width="7" height="7" fill="#00FF00" stroke="#000" stroke-width="1"/>
<rect x="670.5" y="155.5" width="7" height="7" fill="#00FF00" stroke="#000" stroke-width="1"/>
<rect x="619.5" y="188.5" width="7" height="7" fill="#00FF00" stroke="#000" stroke-width="1"/>
<rect x="670.5" y="188.5" width="7" height="7" fill="#00FF00" stroke="#000" stroke-width="1"/>
<text x="533.6" y="267" fill="#000080" stroke="#000080" font-size="8.5" textLength="14" lengthAdjust="spacingAndGlyphs" class="s">U10</text>
<rect x="533.5" y="269.5" width="91" height="78.5" fill="#FFFFB0" stroke="#800000" stroke-width="1"/>
<rect x="464.3" y="279.0" width="57.69999999999999" height="3" fill="#000080"/>
<rect x="522" y="279.0" width="12" height="3" fill="#000"/>
<polygon points="527,278.0 533.5,280.5 527,283.0" fill="#fff" stroke="#000" stroke-width="1"/>
<rect x="464.0" y="281" width="3" height="11.5" fill="#800000"/>
<rect x="453" y="291.9" width="23" height="1.2" fill="#800000"/>
<rect x="456" y="294.9" width="17" height="1.2" fill="#800000"/>
<rect x="460" y="297.9" width="9" height="1.2" fill="#800000"/>
<rect x="463" y="302.0" width="3" height="1" fill="#800000"/>
<text x="456" y="310.6" fill="#800000" stroke="#800000" font-size="8" textLength="18" lengthAdjust="spacingAndGlyphs" class="s">GND</text>
<text x="479.2" y="301" fill="#800000" stroke="#800000" font-size="8" textLength="16" lengthAdjust="spacingAndGlyphs" class="s">VCC</text>
<rect x="482" y="303.0" width="11" height="1" fill="#800000"/>
<rect x="487.0" y="303.5" width="1" height="11.0" fill="#800000"/>
<rect x="487" y="314.0" width="35" height="1" fill="#000080"/>
<rect x="510" y="303.0" width="12" height="1" fill="#000080"/>
<rect x="510.0" y="303" width="1" height="69.5" fill="#000080"/>
<rect x="510" y="372.0" width="70" height="1" fill="#000080"/>
<rect x="465" y="326.0" width="57" height="1" fill="#000080"/>
<rect x="465.0" y="326" width="1" height="195.5" fill="#000080"/>
<rect x="396" y="521.0" width="70" height="1" fill="#000080"/>
<rect x="522" y="303.0" width="12" height="1" fill="#000"/>
<polygon points="527,301.0 533.5,303.5 527,306.0" fill="#fff" stroke="#000" stroke-width="1"/>
<rect x="522" y="314.0" width="12" height="1" fill="#000"/>
<polygon points="527,312.0 533.5,314.5 527,317.0" fill="#fff" stroke="#000" stroke-width="1"/>
<rect x="522" y="326.0" width="12" height="1" fill="#000"/>
<polygon points="527,324.0 533.5,326.5 527,329.0" fill="#fff" stroke="#000" stroke-width="1"/>
<polygon points="534,324.0 539,326.5 534,329.0" fill="#fff" stroke="#000" stroke-width="1"/>
<text x="540.5" y="284" fill="#000" stroke="#000" font-size="8.5" textLength="24" lengthAdjust="spacingAndGlyphs" class="s">D[3..0]</text>
<text x="617" y="284.2" fill="#000" stroke="#000" font-size="8.5" text-anchor="end" textLength="24.3" lengthAdjust="spacingAndGlyphs" class="s">Q[3..0]</text>
<text x="541.5" y="307" fill="#000" stroke="#000" font-size="8.5" class="s">L</text>
<text x="540" y="318" fill="#000" stroke="#000" font-size="8.5" class="s">CE</text>
<text x="545" y="330" fill="#000" stroke="#000" font-size="8.5" class="s">C</text>
<text x="617" y="317.8" fill="#000" stroke="#000" font-size="8.5" text-anchor="end" textLength="16" lengthAdjust="spacingAndGlyphs" class="s">CEO</text>
<text x="617" y="329.4" fill="#000" stroke="#000" font-size="8.5" text-anchor="end" textLength="10" lengthAdjust="spacingAndGlyphs" class="s">TC</text>
<text x="570.2" y="344.7" fill="#000" stroke="#000" font-size="8.5" textLength="15" lengthAdjust="spacingAndGlyphs" class="s">CLR</text>
<rect x="624.5" y="279.0" width="11.5" height="3" fill="#000"/>
<polygon points="624.5,278.0 631.0,280.5 624.5,283.0" fill="#fff" stroke="#000" stroke-width="1"/>
<rect x="624.5" y="314.0" width="12.5" height="1" fill="#000"/>
<polygon points="624.5,312.0 631.0,314.5 624.5,317.0" fill="#fff" stroke="#000" stroke-width="1"/>
<rect x="624.5" y="326.0" width="12.5" height="1" fill="#000"/>
<polygon points="624.5,324.0 631.0,326.5 624.5,329.0" fill="#fff" stroke="#000" stroke-width="1"/>
<rect x="579.0" y="357" width="1" height="4" fill="#000"/>
<rect x="579.0" y="361" width="1" height="22.5" fill="#000080"/>
<rect x="579.0" y="383.5" width="1" height="11.5" fill="#800000"/>
<polygon points="577.05,357.0 579.8,349.5 582.55,357.0" fill="#fff" stroke="#000" stroke-width="1"/>
<circle cx="579.7" cy="372.3" r="2.5" fill="#000080"/>
<text x="533.2" y="371.2" fill="#000080" stroke="#000080" font-size="8" textLength="34" lengthAdjust="spacingAndGlyphs" class="s">CB4CLEB</text>
<rect x="568" y="394.9" width="23" height="1.2" fill="#800000"/>
<rect x="571" y="397.9" width="16" height="1.2" fill="#800000"/>
<rect x="575" y="401.9" width="9" height="1.2" fill="#800000"/>
<rect x="578" y="405.0" width="3" height="1" fill="#800000"/>
<text x="570.2" y="413.7" fill="#800000" stroke="#800000" font-size="8" textLength="17.6" lengthAdjust="spacingAndGlyphs" class="s">GND</text>
<rect x="636" y="279.0" width="36" height="3" fill="#000080"/>
<rect x="672" y="279.0" width="11" height="3" fill="#000"/>
<polygon points="677,278.0 682.5,280.5 677,283.0" fill="#fff" stroke="#000" stroke-width="1"/>
<rect x="683" y="279.0" width="13" height="3" fill="#000080"/>
<rect x="693.0" y="279" width="3" height="36.5" fill="#000080"/>
<text x="653" y="277.6" fill="#000" stroke="#000" font-size="8" textLength="21" lengthAdjust="spacingAndGlyphs" class="s">I[3..0]</text>
<text x="675" y="271.8" fill="#000080" stroke="#000080" font-size="8.5" textLength="13.5" lengthAdjust="spacingAndGlyphs" class="s">U11</text>
<rect x="696" y="280.0" width="10" height="1" fill="#000080"/>
<rect x="706" y="280.0" width="11" height="1" fill="#000"/>
<polygon points="706,278.0 712,280.5 706,283.0" fill="#fff" stroke="#000" stroke-width="1"/>
<text x="715.3" y="278.0" fill="#000" stroke="#000" font-size="8.5" textLength="10.5" lengthAdjust="spacingAndGlyphs" class="s">O0</text>
<rect x="696" y="292.0" width="10" height="1" fill="#000080"/>
<rect x="706" y="292.0" width="11" height="1" fill="#000"/>
<polygon points="706,290.0 712,292.5 706,295.0" fill="#fff" stroke="#000" stroke-width="1"/>
<text x="715.3" y="289.5" fill="#000" stroke="#000" font-size="8.5" textLength="10.5" lengthAdjust="spacingAndGlyphs" class="s">O1</text>
<rect x="696" y="303.0" width="10" height="1" fill="#000080"/>
<rect x="706" y="303.0" width="11" height="1" fill="#000"/>
<polygon points="706,301.0 712,303.5 706,306.0" fill="#fff" stroke="#000" stroke-width="1"/>
<text x="715.3" y="301.0" fill="#000" stroke="#000" font-size="8.5" textLength="10.5" lengthAdjust="spacingAndGlyphs" class="s">O2</text>
<rect x="696" y="314.0" width="10" height="1" fill="#000080"/>
<rect x="706" y="314.0" width="11" height="1" fill="#000"/>
<polygon points="706,312.0 712,314.5 706,317.0" fill="#fff" stroke="#000" stroke-width="1"/>
<text x="715.3" y="312.0" fill="#000" stroke="#000" font-size="8.5" textLength="10.5" lengthAdjust="spacingAndGlyphs" class="s">O3</text>
<rect x="717" y="292.0" width="23" height="1" fill="#000080"/>
<rect x="740" y="292.0" width="12" height="1" fill="#000"/>
<polygon points="746,290.0 752,292.5 746,295.0" fill="#fff" stroke="#000" stroke-width="1"/>
<rect x="752" y="292.0" width="12" height="1" fill="#000080"/>
<text x="735.4" y="289.5" fill="#000" stroke="#000" font-size="8.5" textLength="9.5" lengthAdjust="spacingAndGlyphs" class="s">I0</text>
<rect x="717" y="303.0" width="23" height="1" fill="#000080"/>
<rect x="740" y="303.0" width="12" height="1" fill="#000"/>
<polygon points="746,301.0 752,303.5 746,306.0" fill="#fff" stroke="#000" stroke-width="1"/>
<rect x="752" y="303.0" width="12" height="1" fill="#000080"/>
<text x="735.4" y="301.0" fill="#000" stroke="#000" font-size="8.5" textLength="9.5" lengthAdjust="spacingAndGlyphs" class="s">I1</text>
<rect x="717" y="314.0" width="23" height="1" fill="#000080"/>
<rect x="740" y="314.0" width="12" height="1" fill="#000"/>
<polygon points="746,312.0 752,314.5 746,317.0" fill="#fff" stroke="#000" stroke-width="1"/>
<rect x="752" y="314.0" width="12" height="1" fill="#000080"/>
<text x="735.4" y="312.0" fill="#000" stroke="#000" font-size="8.5" textLength="9.5" lengthAdjust="spacingAndGlyphs" class="s">I2</text>
<rect x="762.0" y="291" width="3" height="24.5" fill="#000080"/>
<rect x="763" y="291.0" width="12" height="3" fill="#000080"/>
<rect x="775" y="291.0" width="11" height="3" fill="#000"/>
<polygon points="775.5,290.0 782.0,292.5 775.5,295.0" fill="#fff" stroke="#000" stroke-width="1"/>
<text x="749.4" y="283" fill="#000080" stroke="#000080" font-size="8.5" textLength="13.5" lengthAdjust="spacingAndGlyphs" class="s">U12</text>
<text x="784" y="291.2" fill="#000" stroke="#000" font-size="8" textLength="24" lengthAdjust="spacingAndGlyphs" class="s">O[2..0]</text>
<text x="675.2" y="328.4" fill="#000080" stroke="#000080" font-size="8" textLength="26" lengthAdjust="spacingAndGlyphs" class="s">BUS_JS</text>
<text x="749" y="328.4" fill="#000080" stroke="#000080" font-size="8" textLength="26" lengthAdjust="spacingAndGlyphs" class="s">BUS_JS</text>
<circle cx="122.2" cy="520.8" r="8.3" fill="#C8C8C8" stroke="#0000FF" stroke-width="1.2"/>
<polyline points="116,522.5 119.5,522.5 119.5,518.5 121.5,518.5 121.5,522.5 123.5,522.5 123.5,518.5 127.5,518.5 127.5,522.5 130,522.5" fill="none" stroke="#0000FF" stroke-width="1.2" stroke-linecap="butt" stroke-linejoin="miter"/>
<polygon points="149.5,516.5 207,516.5 212,522 207,527.5 149.5,527.5" fill="#D4D4D4" stroke="#000" stroke-width="1"/>
<text x="168" y="524.8" fill="#000" stroke="#000" font-size="8" textLength="36" lengthAdjust="spacingAndGlyphs" class="s">CLK_BRD</text>
<rect x="212" y="521.0" width="10" height="1" fill="#000"/>
<polygon points="212.5,519.0 218.0,521.5 212.5,524.0" fill="#fff" stroke="#000" stroke-width="1"/>
<rect x="222" y="521.0" width="15" height="1" fill="#000080"/>
<rect x="237" y="521.0" width="21" height="1" fill="#000"/>
<polygon points="252,519.0 258,521.5 252,524.0" fill="#fff" stroke="#000" stroke-width="1"/>
<text x="258.2" y="508" fill="#000080" stroke="#000080" font-size="8.5" textLength="13.5" lengthAdjust="spacingAndGlyphs" class="s">U15</text>
<rect x="258.5" y="510.5" width="114" height="45" fill="#7A7A86" stroke="#800000" stroke-width="1"/>
<rect x="263.5" y="516.5" width="103" height="21.5" fill="#C8C8DC" stroke="#800000" stroke-width="1"/>
<text x="266.3" y="525" fill="#000" stroke="#000" font-size="8.5" textLength="39.5" lengthAdjust="spacingAndGlyphs" class="s">TIMEBASE</text>
<text x="362" y="525" fill="#000" stroke="#000" font-size="8.5" text-anchor="end" textLength="20.5" lengthAdjust="spacingAndGlyphs" class="s">FREQ</text>
<text x="272.8" y="550.2" fill="#F4F4F4" stroke="#F4F4F4" font-size="8.5" textLength="72.3" lengthAdjust="spacingAndGlyphs" class="s">Frequency Generator</text>
<text x="258.2" y="564.8" fill="#000080" stroke="#000080" font-size="8.5" textLength="32.5" lengthAdjust="spacingAndGlyphs" class="s">CLKGEN</text>
<rect x="373" y="521.0" width="23" height="1" fill="#000"/>
<polygon points="373.5,519.0 379.0,521.5 373.5,524.0" fill="#fff" stroke="#000" stroke-width="1"/></svg></body></html>
